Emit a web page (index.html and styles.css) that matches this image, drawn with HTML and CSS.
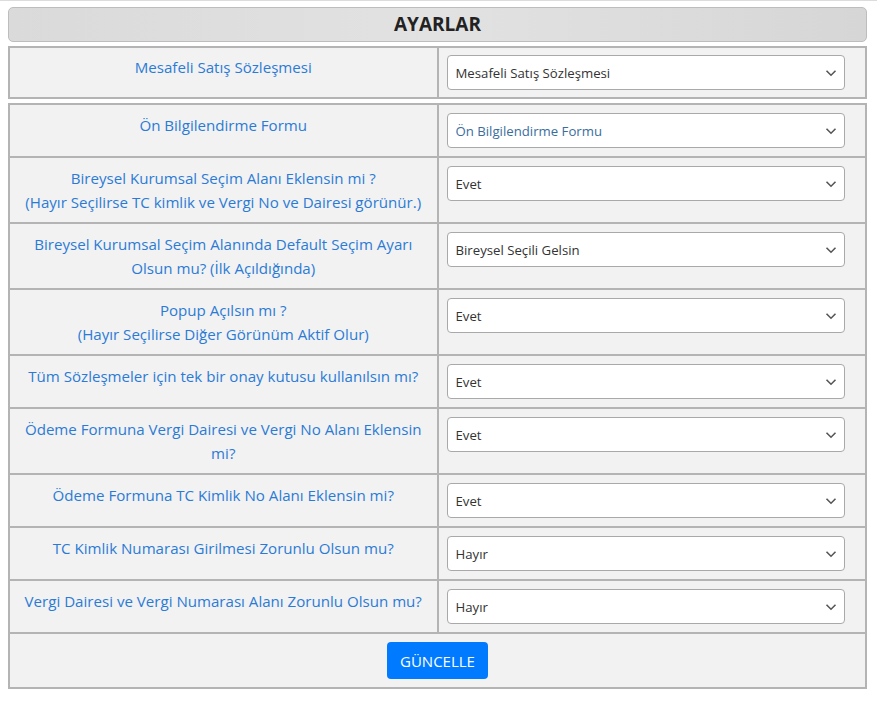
FILE: index.html
```html
<!DOCTYPE html>
<html lang="tr">
<head>
<meta charset="utf-8">
<title>Ayarlar</title>
<link rel="stylesheet" href="styles.css">
</head>
<body>
<div class="page">
  <div class="heading">AYARLAR</div>

  <table class="settings first">
    <colgroup><col class="half"><col class="half"></colgroup>
    <tr>
      <td class="label">Mesafeli Satış Sözleşmesi</td>
      <td class="field"><div class="sel"><select><option>Mesafeli Satış Sözleşmesi</option></select><svg viewBox="0 0 12 8"><path d="M1.5 1.8 6 6.2 10.5 1.8"/></svg></div></td>
    </tr>
  </table>

  <table class="settings">
    <colgroup><col class="half"><col class="half"></colgroup>
    <tr>
      <td class="label">Ön Bilgilendirme Formu</td>
      <td class="field"><div class="sel"><select class="blue"><option>Ön Bilgilendirme Formu</option></select><svg viewBox="0 0 12 8"><path d="M1.5 1.8 6 6.2 10.5 1.8"/></svg></div></td>
    </tr>
    <tr>
      <td class="label">Bireysel Kurumsal Seçim Alanı Eklensin mi ?<br>(Hayır Seçilirse TC kimlik ve Vergi No ve Dairesi görünür.)</td>
      <td class="field"><div class="sel"><select><option>Evet</option><option>Hayır</option></select><svg viewBox="0 0 12 8"><path d="M1.5 1.8 6 6.2 10.5 1.8"/></svg></div></td>
    </tr>
    <tr>
      <td class="label">Bireysel Kurumsal Seçim Alanında Default Seçim Ayarı Olsun mu? (İlk Açıldığında)</td>
      <td class="field"><div class="sel"><select><option>Bireysel Seçili Gelsin</option></select><svg viewBox="0 0 12 8"><path d="M1.5 1.8 6 6.2 10.5 1.8"/></svg></div></td>
    </tr>
    <tr>
      <td class="label">Popup Açılsın mı ?<br>(Hayır Seçilirse Diğer Görünüm Aktif Olur)</td>
      <td class="field"><div class="sel"><select><option>Evet</option><option>Hayır</option></select><svg viewBox="0 0 12 8"><path d="M1.5 1.8 6 6.2 10.5 1.8"/></svg></div></td>
    </tr>
    <tr>
      <td class="label">Tüm Sözleşmeler için tek bir onay kutusu kullanılsın mı?</td>
      <td class="field"><div class="sel"><select><option>Evet</option><option>Hayır</option></select><svg viewBox="0 0 12 8"><path d="M1.5 1.8 6 6.2 10.5 1.8"/></svg></div></td>
    </tr>
    <tr>
      <td class="label">Ödeme Formuna Vergi Dairesi ve Vergi No Alanı Eklensin mi?</td>
      <td class="field"><div class="sel"><select><option>Evet</option><option>Hayır</option></select><svg viewBox="0 0 12 8"><path d="M1.5 1.8 6 6.2 10.5 1.8"/></svg></div></td>
    </tr>
    <tr>
      <td class="label">Ödeme Formuna TC Kimlik No Alanı Eklensin mi?</td>
      <td class="field"><div class="sel"><select><option>Evet</option><option>Hayır</option></select><svg viewBox="0 0 12 8"><path d="M1.5 1.8 6 6.2 10.5 1.8"/></svg></div></td>
    </tr>
    <tr>
      <td class="label">TC Kimlik Numarası Girilmesi Zorunlu Olsun mu?</td>
      <td class="field"><div class="sel"><select><option>Hayır</option><option>Evet</option></select><svg viewBox="0 0 12 8"><path d="M1.5 1.8 6 6.2 10.5 1.8"/></svg></div></td>
    </tr>
    <tr>
      <td class="label">Vergi Dairesi ve Vergi Numarası Alanı Zorunlu Olsun mu?</td>
      <td class="field"><div class="sel"><select><option>Hayır</option><option>Evet</option></select><svg viewBox="0 0 12 8"><path d="M1.5 1.8 6 6.2 10.5 1.8"/></svg></div></td>
    </tr>
    <tr>
      <td class="actions" colspan="2"><button type="button" class="btn">GÜNCELLE</button></td>
    </tr>
  </table>
</div>
</body>
</html>
```

FILE: styles.css
```css
html, body {
  margin: 0;
  padding: 0;
  background: #ffffff;
}

body {
  border-top: 1px solid #dcdcdc;
  font-family: "Open Sans", "Noto Sans", sans-serif;
}

.page {
  width: 859px;
  padding: 6px 0 0 8px;
}

.heading {
  height: 33px;
  line-height: 33px;
  text-align: center;
  font-size: 19px;
  font-weight: 700;
  color: #222222;
  background: linear-gradient(to right, #dadada, #e2e2e2 50%, #d6d6d6);
  border: 1px solid #bdbdbd;
  border-radius: 5px;
  margin-bottom: 4px;
}

.settings {
  width: 100%;
  border-collapse: separate;
  border-spacing: 0;
  border: 1px solid #b4b4b4;
  background: #f2f2f2;
  table-layout: fixed;
  margin-bottom: 4px;
}

.half {
  width: 50%;
}

.settings td {
  border: 1px solid #b4b4b4;
  padding: 8px 8px;
  vertical-align: top;
}

.first td {
  padding-top: 7px;
  padding-bottom: 7px;
}

.label {
  text-align: center;
  color: #2b7bd6;
  font-size: 15.1px;
  line-height: 24px;
}

.sel {
  position: relative;
  width: calc(100% - 12px);
}

.sel select {
  display: block;
  width: 100%;
  height: 35px;
  padding: 0 30px 0 8px;
  font-family: "Open Sans", "Noto Sans", sans-serif;
  font-size: 13.2px;
  color: #333333;
  background: #ffffff;
  border: 1px solid #a9a9a9;
  border-radius: 4px;
  appearance: none;
  -webkit-appearance: none;
}

.sel select.blue {
  color: #3a6d9e;
}

.sel svg {
  position: absolute;
  right: 8px;
  top: 14px;
  width: 12px;
  height: 8px;
  pointer-events: none;
}

.sel svg path {
  fill: none;
  stroke: #555555;
  stroke-width: 1.6;
}

.actions {
  text-align: center;
}

.settings td.actions {
  padding: 8px 8px 8px;
  height: 37px;
}

.btn {
  display: inline-block;
  height: 37px;
  padding: 0 13px;
  background: #007bff;
  color: #ffffff;
  border: none;
  border-radius: 4px;
  font-family: "Open Sans", "Noto Sans", sans-serif;
  font-size: 15px;
}
```
